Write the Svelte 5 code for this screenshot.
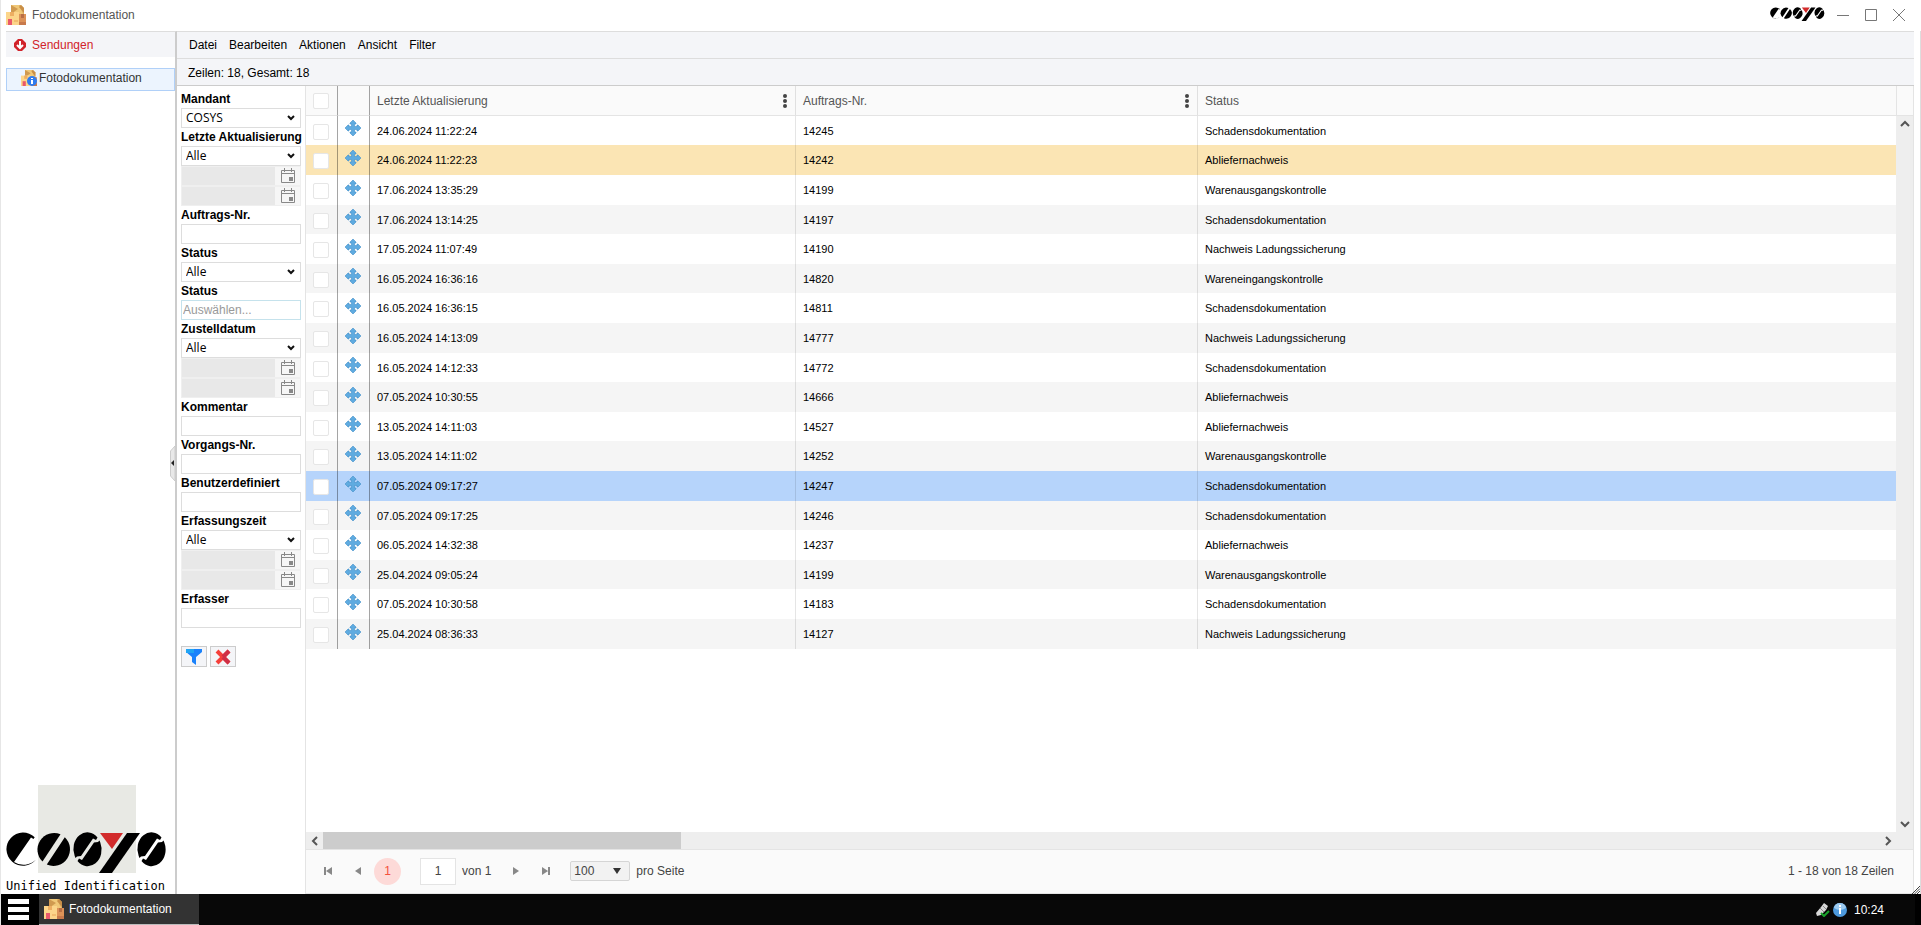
<script>
  const rows = [
    ['24.06.2024 11:22:24', '14245', 'Schadensdokumentation'],
    ['24.06.2024 11:22:23', '14242', 'Abliefernachweis', 'hover'],
    ['17.06.2024 13:35:29', '14199', 'Warenausgangskontrolle'],
    ['17.06.2024 13:14:25', '14197', 'Schadensdokumentation'],
    ['17.05.2024 11:07:49', '14190', 'Nachweis Ladungssicherung'],
    ['16.05.2024 16:36:16', '14820', 'Wareneingangskontrolle'],
    ['16.05.2024 16:36:15', '14811', 'Schadensdokumentation'],
    ['16.05.2024 14:13:09', '14777', 'Nachweis Ladungssicherung'],
    ['16.05.2024 14:12:33', '14772', 'Schadensdokumentation'],
    ['07.05.2024 10:30:55', '14666', 'Abliefernachweis'],
    ['13.05.2024 14:11:03', '14527', 'Abliefernachweis'],
    ['13.05.2024 14:11:02', '14252', 'Warenausgangskontrolle'],
    ['07.05.2024 09:17:27', '14247', 'Schadensdokumentation', 'selected'],
    ['07.05.2024 09:17:25', '14246', 'Schadensdokumentation'],
    ['06.05.2024 14:32:38', '14237', 'Abliefernachweis'],
    ['25.04.2024 09:05:24', '14199', 'Warenausgangskontrolle'],
    ['07.05.2024 10:30:58', '14183', 'Schadensdokumentation'],
    ['25.04.2024 08:36:33', '14127', 'Nachweis Ladungssicherung']
  ];

  const filters = [
    { label: 'Mandant', type: 'select', value: 'COSYS' },
    { label: 'Letzte Aktualisierung', type: 'date', value: 'Alle' },
    { label: 'Auftrags-Nr.', type: 'text' },
    { label: 'Status', type: 'select', value: 'Alle' },
    { label: 'Status', type: 'multi', placeholder: 'Auswählen...' },
    { label: 'Zustelldatum', type: 'date', value: 'Alle' },
    { label: 'Kommentar', type: 'text' },
    { label: 'Vorgangs-Nr.', type: 'text' },
    { label: 'Benutzerdefiniert', type: 'text' },
    { label: 'Erfassungszeit', type: 'date', value: 'Alle' },
    { label: 'Erfasser', type: 'text' }
  ];

  const menu = ['Datei', 'Bearbeiten', 'Aktionen', 'Ansicht', 'Filter'];
</script>

{#snippet boxes(size)}
  <svg width={size} height={size} viewBox="0 0 20 20" aria-hidden="true">
    <path d="M5 0h10l3 3v8H5z" fill="#e0b060" />
    <path d="M5 0h8l4 9H5z" fill="#f0c878" />
    <path d="M5 0l7 4-7 5z" fill="#d09a50" />
    <path d="M15 0l3 3v5l-5-6z" fill="#c98f48" />
    <path d="M0 7h13v13H0z" fill="#fcd58a" />
    <path d="M4 7h4v4H4z" fill="#edae62" />
    <path d="M13 9h7v11h-7z" fill="#dc9258" />
    <path d="M15 9h3v4h-3z" fill="#b96f45" />
    <path d="M13 17h7v3h-7z" fill="#c87a4c" />
    <path d="M2 14h4v6H2z" fill="#e8596b" />
    <path d="M8 15h4v2H8z" fill="#f2bd70" />
  </svg>
{/snippet}

{#snippet markCurve()}
  <path d="M91.500 5.500A14 16.600 0 0 0 68.700 24L69.500 26 71 24.500 75 24 87 6.500 90 8z" />
  <path d="M71.500 29.100A14 16.600 0 0 0 94.300 10.600L93.500 8.600 92 10.100 88 10.600 76 28.100 73 26.600z" />
{/snippet}

{#snippet mark()}
  <path d="M28.700 5.300A16.600 16.600 0 1 0 30 27.500A17.500 17.500 0 0 1 8 30L25 5.500 27.500 7z" />
  <path d="M54.500 2.300A16.600 16.600 0 0 0 36.500 29.500z" />
  <path d="M58.800 5.200A16.600 16.600 0 0 1 40.800 32.500z" />
  {@render markCurve()}
  <path d="M121 1h13L106 41H93z" />
  <g transform="translate(64 0)">{@render markCurve()}</g>
  <path d="M94 1h23l-11 16z" fill="#d22b2b" />
{/snippet}

{#snippet calendar()}
  <svg width="16" height="16" viewBox="0 0 16 16" aria-hidden="true">
    <path d="M1.500 2.500h13v12h-13zM1.500 5.500h13M4.500 0v4M11.500 0v4" fill="none" stroke="#888" />
    <path d="M9 9h4v4H9z" fill="#888" />
  </svg>
{/snippet}

<div class="desktop">
  <header class="titlebar">
    {@render boxes(20)}
    <span class="title">Fotodokumentation</span>
    <svg class="brand" width="55" height="15" viewBox="0 0 162 43" role="img" aria-label="COSYS">{@render mark()}</svg>
    <button class="win" aria-label="Minimieren"><svg width="12" height="12"><path d="M0 6.5h12" stroke="#777" /></svg></button>
    <button class="win" aria-label="Maximieren"><svg width="12" height="12"><path d="M.5.5h11v11H.5z" fill="none" stroke="#777" /></svg></button>
    <button class="win" aria-label="Schließen"><svg width="12" height="12"><path d="M0 0l12 12M12 0L0 12" stroke="#777" /></svg></button>
  </header>

  <div class="window">
    <aside class="sidebar">
      <h2>
        <svg width="12" height="12" viewBox="0 0 12 12" aria-hidden="true">
          <path d="M4 0h4l4 4v4l-4 4H4L0 8V4z" fill="#d1232a" />
          <path d="M6 2v6M3 6l3 3 3-3" stroke="#fff" stroke-width="2" fill="none" />
        </svg>
        Sendungen
      </h2>
      <a class="nav" href="#fotodokumentation">
        <span class="nav-icon">
          {@render boxes(16)}
          <svg class="info" width="10" height="10" viewBox="0 0 10 10" aria-hidden="true">
            <circle cx="5" cy="5" r="5" fill="#2f7cf0" />
            <path d="M4 2h2v1H4zM4 4h2v4H4z" fill="#fff" />
          </svg>
        </span>
        Fotodokumentation
      </a>
      <svg class="logo" width="162" height="108" viewBox="0 0 162 108" role="img" aria-label="COSYS Unified Identification">
        <path d="M32 0h98v88H32z" fill="#e8e9e4" />
        <g transform="translate(0 47)">{@render mark()}</g>
        <text x="0" y="105">Unified Identification</text>
      </svg>
      <button class="splitter" aria-label="Navigation einklappen">
        <svg width="5" height="35" viewBox="0 0 5 35"><path d="M5 0v35L.5 30V5z" fill="#e8e8e8" stroke="#ccc" /><path d="M4 14v6L1 17z" fill="#222" /></svg>
      </button>
    </aside>

    <main>
      <nav class="menu">
        {#each menu as item}
          <button>{item}</button>
        {/each}
      </nav>
      <div class="count">Zeilen: 18, Gesamt: 18</div>

      <div class="content">
        <form class="filters">
          {#each filters as f, i}
            <label for="filter-{i}">{f.label}</label>
            {#if f.type === 'select' || f.type === 'date'}
              <div class="select">
                <select id="filter-{i}"><option>{f.value}</option></select>
                <svg width="8" height="6" viewBox="0 0 8 6" aria-hidden="true"><path d="M1 1l3 3 3-3" fill="none" stroke="#111" stroke-width="2" /></svg>
              </div>
            {:else}
              <input class:multi={f.type === 'multi'} id="filter-{i}" type="text" placeholder={f.placeholder} />
            {/if}
            {#if f.type === 'date'}
              {#each ['von', 'bis'] as edge}
                <div class="date">
                  <input type="text" aria-label="{f.label} {edge}" disabled />
                  <button type="button" aria-label="Kalender {edge}" disabled>{@render calendar()}</button>
                </div>
              {/each}
            {/if}
          {/each}
          <div class="actions">
            <button type="button" aria-label="Filtern">
              <svg width="16" height="16" viewBox="0 0 16 16"><path d="M0 0h16v3l-6 5v8l-4-3V8L0 3z" fill="#1a82fb" /><path d="M0 0h8v4H0z" fill="#20a4f3" /></svg>
            </button>
            <button type="button" aria-label="Filter löschen">
              <svg width="16" height="16" viewBox="0 0 16 16"><path d="M2 2l12 12" stroke="#f5403a" stroke-width="4" /><path d="M14 2L2 14" stroke="#f5403a" stroke-width="4" /><path d="M8 8l6-6M8 8l6 6" stroke="#cf2f45" stroke-width="4" /></svg>
            </button>
          </div>
        </form>

        <section class="grid">
          <div class="grid-view">
            <div class="scroller">
              <table>
                <colgroup>
                  <col class="c-check" /><col class="c-move" /><col class="c-date" /><col class="c-order" /><col />
                </colgroup>
                <thead>
                  <tr>
                    <th class="dark"><input type="checkbox" aria-label="Alle auswählen" /></th>
                    <th class="dark"></th>
                    {#each ['Letzte Aktualisierung', 'Auftrags-Nr.', 'Status'] as head, i}
                      <th>
                        <div class="head">
                          {head}
                          {#if i < 2}
                            <button aria-label="Spaltenmenü {head}"><svg width="4" height="14" viewBox="0 0 4 14"><circle cx="2" cy="2" r="2" /><circle cx="2" cy="7" r="2" /><circle cx="2" cy="12" r="2" /></svg></button>
                          {/if}
                        </div>
                      </th>
                    {/each}
                  </tr>
                </thead>
                <tbody>
                  {#each rows as [date, order, status, mode]}
                    <tr class={mode}>
                      <td class="dark"><input type="checkbox" aria-label="Auftrag {order} auswählen" /></td>
                      <td class="dark move">
                        <svg width="16" height="16" viewBox="0 0 16 16" aria-hidden="true">
                          <path d="M8 0l3 3v1H9.500v2.500H12V5h1l3 3-3 3h-1V9.500H9.500V12H11v1l-3 3-3-3v-1h1.500V9.500H4V11H3L0 8l3-3h1v1.500h2.500V4H5V3z" fill="#5fabe0" stroke="#4590ca" stroke-width=".6" />
                        </svg>
                      </td>
                      <td>{date}</td>
                      <td>{order}</td>
                      <td>{status}</td>
                    </tr>
                  {/each}
                </tbody>
              </table>
            </div>
            <div class="vbar">
              <div class="corner"></div>
              <svg width="10" height="8" viewBox="0 0 10 8" aria-hidden="true"><path d="M1 6l4-4 4 4" /></svg>
              <svg width="10" height="8" viewBox="0 0 10 8" aria-hidden="true"><path d="M1 2l4 4 4-4" /></svg>
            </div>
          </div>

          <div class="hbar">
            <svg width="8" height="10" viewBox="0 0 8 10" aria-hidden="true"><path d="M6 1L2 5l4 4" /></svg>
            <div class="track"><div class="thumb"></div></div>
            <svg width="8" height="10" viewBox="0 0 8 10" aria-hidden="true"><path d="M2 1l4 4-4 4" /></svg>
          </div>

          <footer class="pager">
            <button aria-label="Erste Seite"><svg width="8" height="8"><path d="M0 0h2v8H0zM8 0v8L2 4z" /></svg></button>
            <button aria-label="Vorherige Seite"><svg width="8" height="8"><path d="M7 0v8L1 4z" /></svg></button>
            <button class="page">1</button>
            <input type="text" value="1" aria-label="Seite" />
            <span>von 1</span>
            <button class="next" aria-label="Nächste Seite"><svg width="8" height="8"><path d="M1 0v8l6-4z" /></svg></button>
            <button aria-label="Letzte Seite"><svg width="8" height="8"><path d="M6 0h2v8H6zM0 0v8l6-4z" /></svg></button>
            <div class="select size">
              <select id="page-size"><option>100</option></select>
              <svg width="8" height="6" viewBox="0 0 8 6" aria-hidden="true"><path d="M0 0h8L4 6z" fill="#333" /></svg>
            </div>
            <label for="page-size">pro Seite</label>
            <span class="info-text">1 - 18 von 18 Zeilen</span>
          </footer>
        </section>
      </div>
    </main>
    <svg class="grip" width="8" height="8" viewBox="0 0 8 8" aria-hidden="true"><path d="M0 8l8-8M2.500 8L8 2.500M5 8l3-3" stroke="#444" /></svg>
  </div>

  <div class="taskbar">
    <button class="start" aria-label="Startmenü"><svg width="21" height="21"><path d="M0 0h21v5H0zM0 8h21v5H0zM0 16h21v5H0z" fill="#fff" /></svg></button>
    <button class="task">{@render boxes(20)} Fotodokumentation</button>
    <div class="tray">
      <svg width="15" height="14" viewBox="0 0 15 14" aria-hidden="true">
        <path d="M9 0l4 3-2 4-5 5-4 1-1-3 5-6z" fill="#d8d8d8" />
        <path d="M5 5l4 4M8 3l3 3" stroke="#888" />
        <path d="M6 10l3 3 5-5" fill="none" stroke="#18a32a" stroke-width="2" />
      </svg>
      <svg width="14" height="14" viewBox="0 0 14 14" aria-hidden="true">
        <circle cx="7" cy="7" r="7" fill="#4d9add" />
        <path d="M1 5a6 5 0 0 1 12 0q-6 4-12 0z" fill="#9bcaf0" />
        <path d="M6 2h2v2H6zM6 5h2v6H6z" fill="#fff" />
      </svg>
      <span>10:24</span>
    </div>
  </div>
</div>

<style>
  :global(body) {
    background: #fff;
  }

  .desktop {
    display: flex;
    flex-direction: column;
    min-height: 100vh;
    box-sizing: border-box;
    border-left: 1px solid #e6e6e6;
    font: 12px/16px "Liberation Sans", Arial, sans-serif;
    color: #000;
  }

  .desktop * {
    box-sizing: border-box;
  }

  svg {
    display: block;
    flex: none;
  }

  button,
  input,
  select {
    margin: 0;
    padding: 0;
    font: inherit;
    color: inherit;
    border: 0;
    border-radius: 0;
    background: none;
    appearance: none;
    outline: 0;
  }

  .titlebar {
    display: flex;
    align-items: center;
    height: 31px;
    padding: 0 16px 2px 5px;
    color: #555;
  }

  .title {
    flex: 1;
    margin-left: 6px;
  }

  .brand {
    margin-right: 12px;
  }

  .win {
    margin-right: 16px;
  }

  .win:last-child {
    margin-right: 0;
  }

  .window {
    position: relative;
    flex: 1;
    display: flex;
    padding: 0 6px 0 5px;
    border-right: 1px solid #ddd;
  }

  .sidebar {
    position: relative;
    display: flex;
    flex-direction: column;
    flex: none;
    width: 171px;
    border-top: 1px solid #ddd;
    border-right: 2px solid #ccc;
  }

  h2 {
    display: flex;
    align-items: center;
    gap: 6px;
    height: 25px;
    margin: 0;
    padding-left: 8px;
    font-size: 12px;
    font-weight: normal;
    color: #d1232a;
    background: #f4f5f8;
  }

  .nav {
    display: flex;
    align-items: center;
    height: 23px;
    margin-top: 11px;
    padding: 0 0 3px 14px;
    gap: 2px;
    color: #333;
    text-decoration: none;
    background: #ecf4fe;
    border: 1px solid #b0d0f8;
  }

  .nav-icon {
    position: relative;
  }

  .info {
    position: absolute;
    right: 0;
    bottom: 0;
  }

  .logo {
    margin-top: auto;
    margin-bottom: 1px;
  }

  .logo text {
    font: 12px "DejaVu Sans Mono", monospace;
  }

  .splitter {
    position: absolute;
    right: 0;
    top: 414px;
  }

  main {
    flex: 1;
    min-width: 0;
    display: flex;
    flex-direction: column;
    border-top: 1px solid #ddd;
  }

  .menu {
    display: flex;
    align-items: center;
    gap: 12px;
    height: 27px;
    padding-left: 12px;
    background: #f4f5f8;
    border-bottom: 1px solid #ddd;
  }

  .count {
    height: 27px;
    padding: 6px 11px 4px;
    background: #f4f5f8;
    border-bottom: 1px solid #ccc;
  }

  .content {
    flex: 1;
    display: flex;
  }

  .filters {
    flex: none;
    width: 128px;
    padding: 4px 4px 0;
  }

  .filters label {
    display: block;
    height: 18px;
    line-height: 18px;
    font-weight: bold;
    white-space: nowrap;
  }

  .filters > input,
  .select {
    display: block;
    width: 100%;
    height: 20px;
    border: 1px solid #ddd;
    background: #fff;
  }

  .filters > input {
    padding: 0 1px;
  }

  .filters > .multi {
    border-color: #c5e2ec;
  }

  .multi::placeholder {
    color: #999;
    opacity: 1;
  }

  .select {
    display: flex;
    align-items: center;
    padding-right: 5px;
  }

  .select select {
    flex: 1;
    min-width: 0;
    height: 18px;
    padding-left: 4px;
    font-family: "Open Sans", "Noto Sans", sans-serif;
  }

  .date {
    display: flex;
    height: 20px;
    border: 1px solid #efefef;
    background: #f6f6f6;
  }

  .date input {
    flex: 1;
    min-width: 0;
    background: #e8e8e8;
  }

  .date button {
    width: 25px;
    padding-left: 5px;
  }

  .actions {
    display: flex;
    gap: 3px;
    margin-top: 18px;
  }

  .actions button {
    display: grid;
    place-items: center;
    width: 26px;
    height: 21px;
    background: #f4f5f8;
    border: 1px solid #ccc;
  }

  .grid {
    flex: 1;
    min-width: 0;
    display: flex;
    flex-direction: column;
    border: solid #e4e4e4;
    border-width: 0 1px 1px;
  }

  .grid-view {
    flex: 1;
    display: flex;
  }

  .scroller {
    flex: 1;
    min-width: 0;
  }

  table {
    width: 100%;
    table-layout: fixed;
    border-collapse: separate;
    border-spacing: 0;
    font-size: 11px;
  }

  .c-check,
  .c-move {
    width: 32px;
  }

  .c-date {
    width: 425px;
  }

  .c-order {
    width: 402px;
  }

  th,
  td {
    padding: 0 0 0 7px;
    text-align: left;
    vertical-align: middle;
    border-left: 1px solid #0000001a;
  }

  th {
    height: 30px;
    font-size: 12px;
    font-weight: normal;
    color: #555;
    background: #fafafa;
    border-bottom: 1px solid #e4e4e4;
  }

  th:first-child,
  td:first-child {
    border-left: 0;
  }

  .dark {
    border-right: 1px solid #0000005a;
    border-left: 0;
  }

  .dark + :not(.dark) {
    border-left: 0;
  }

  .head {
    display: flex;
    align-items: center;
    justify-content: space-between;
    padding-right: 8px;
  }

  .head svg {
    fill: #444;
  }

  tbody tr {
    height: 30px;
  }

  /* the grid steps by 29.6px, so two rows in five are one pixel shorter */
  tbody tr:nth-child(5n + 1),
  tbody tr:nth-child(5n + 4) {
    height: 29px;
  }

  tbody tr:nth-child(even) {
    background: #f5f5f5;
  }

  tbody tr.hover {
    background: #fbe5b4;
  }

  tbody tr.selected {
    background: #b6d4fb;
  }

  td.move {
    padding-bottom: 5px;
  }

  table input {
    display: block;
    width: 16px;
    height: 16px;
    border: 1px solid #e6e6e6;
    border-radius: 2px;
    background: #fff;
  }

  td input {
    margin-top: 2px;
  }

  .vbar {
    display: flex;
    flex-direction: column;
    align-items: center;
    justify-content: space-between;
    width: 17px;
    padding-bottom: 4px;
    background: #eee;
  }

  .vbar .corner {
    width: 100%;
    height: 30px;
    background: #fafafa;
    border-left: 1px solid #e4e4e4;
    border-bottom: 1px solid #e4e4e4;
  }

  .vbar .corner + svg {
    margin: 4px 0 auto;
  }

  .vbar path,
  .hbar path {
    fill: none;
    stroke: #555;
    stroke-width: 2;
  }

  .hbar {
    display: flex;
    align-items: center;
    height: 18px;
    padding: 0 21px 0 5px;
    background: #eee;
    border-bottom: 1px solid #e4e4e4;
  }

  .track {
    flex: 1;
    height: 100%;
    margin: 0 4px;
  }

  .thumb {
    width: 23%;
    height: 100%;
    background: #ccc;
  }

  .pager {
    display: flex;
    align-items: center;
    height: 43px;
    padding: 0 19px 1px 8px;
    color: #444;
    background: #fafafa;
  }

  .pager button {
    display: grid;
    place-items: center;
    width: 27px;
    height: 27px;
  }

  .pager button + button {
    margin-left: 3px;
  }

  .pager button svg {
    fill: #888;
  }

  .pager .page {
    color: #f4513c;
    background: #fddad8;
    border-radius: 50%;
  }

  .pager input {
    width: 36px;
    height: 27px;
    margin: 0 6px 0 19px;
    text-align: center;
    background: #fff;
    border: 1px solid #e4e4e4;
  }

  .pager .next {
    margin-left: 11px;
  }

  .pager .size {
    width: 60px;
    margin: 0 6px 0 11px;
    padding-right: 8px;
    background: #f2f2f2;
    border-color: #d5d5d5;
    border-radius: 2px;
  }

  .size select {
    padding-left: 3px;
    font-family: inherit;
  }

  .info-text {
    margin-left: auto;
  }

  .grip {
    position: absolute;
    right: 0;
    bottom: 0;
  }

  .taskbar {
    display: flex;
    height: 31px;
    color: #fff;
    background: #080808;
  }

  .start {
    display: grid;
    place-items: center;
    width: 38px;
    background: #000;
    padding-right: 3px;
  }

  .task {
    display: flex;
    align-items: center;
    gap: 5px;
    width: 160px;
    padding-left: 5px;
    background: #333;
    border-bottom: 1px solid #bbb;
  }

  .tray {
    display: flex;
    align-items: center;
    gap: 3px;
    margin-left: auto;
    padding-right: 31px;
    border-right: 6px solid #000;
  }

  .tray span {
    margin-left: 4px;
  }
</style>
